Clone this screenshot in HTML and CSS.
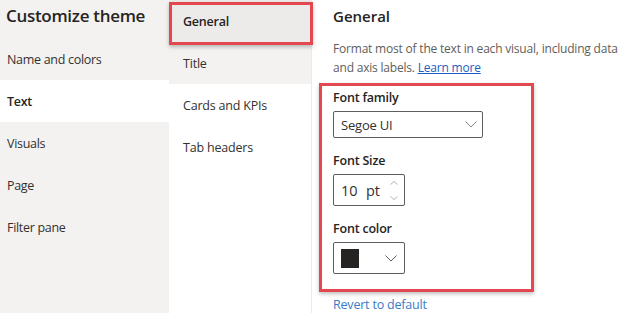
FILE: index.html
```html
<!DOCTYPE html>
<html lang="en">
<head>
    <meta charset="UTF-8">
    <title>Customize theme</title>
    <link rel="stylesheet" href="styles.css">
</head>
<body>

<div class="layout">
    <!-- Sol menü -->
    <nav class="sidebar">
        <h1>Customize theme</h1>
        <div class="side-item">Name and colors</div>
        <div class="side-item active">Text</div>
        <div class="side-item">Visuals</div>
        <div class="side-item">Page</div>
        <div class="side-item">Filter pane</div>
    </nav>

    <!-- Alt sekmeler -->
    <div class="subnav">
        <div class="sub-item active">General<span class="mark"></span></div>
        <div class="sub-item hover">Title</div>
        <div class="sub-item">Cards and KPIs</div>
        <div class="sub-item">Tab headers</div>
    </div>

    <!-- Ayarlar -->
    <main class="content">
        <h2>General</h2>
        <p class="desc">Format most of the text in each visual, including data and axis labels. <a href="#">Learn more</a></p>

        <div class="highlight">
            <div class="field">
                <label>Font family</label>
                <div class="select wide">
                    <span>Segoe UI</span>
                    <svg class="chev" width="12" height="7" viewBox="0 0 12 7"><path d="M0.5 0.5 L6 6 L11.5 0.5" fill="none" stroke="#8a8886" stroke-width="1"/></svg>
                </div>
            </div>
            <div class="field">
                <label>Font Size</label>
                <div class="spin">
                    <span class="num">10</span>
                    <span class="unit">pt</span>
                    <span class="arrows">
                        <svg width="8" height="4" viewBox="0 0 8 4"><path d="M0.5 3.5 L4 0.5 L7.5 3.5" fill="none" stroke="#a19f9d" stroke-width="0.8"/></svg>
                        <svg width="8" height="4" viewBox="0 0 8 4"><path d="M0.5 0.5 L4 3.5 L7.5 0.5" fill="none" stroke="#a19f9d" stroke-width="0.8"/></svg>
                    </span>
                </div>
            </div>
            <div class="field">
                <label>Font color</label>
                <div class="select color">
                    <span class="swatch"></span>
                    <svg class="chev" width="12" height="7" viewBox="0 0 12 7"><path d="M0.5 0.5 L6 6 L11.5 0.5" fill="none" stroke="#605e5c" stroke-width="1"/></svg>
                </div>
            </div>
        </div>

        <a href="#" class="revert">Revert to default</a>
    </main>
</div>

</body>
</html>
```

FILE: styles.css
```css
body {
    margin: 0;
    font-family: 'Open Sans', 'Noto Sans', sans-serif;
    color: #323130;
    background-color: #fff;
}
.layout {
    display: flex;
    height: 313px;
    overflow: hidden;
}
.sidebar {
    width: 169px;
    flex-shrink: 0;
    background-color: #f3f2f1;
}
.sidebar h1 {
    margin: 0;
    height: 38px;
    padding: 4px 0 0 6px;
    box-sizing: border-box;
    font-size: 17px;
    font-weight: 600;
    color: #252423;
    letter-spacing: -0.3px;
}
.side-item {
    height: 42px;
    display: flex;
    align-items: center;
    padding-left: 7px;
    font-size: 12.5px;
    letter-spacing: -0.3px;
    color: #323130;
}
.side-item.active {
    background-color: #fff;
    font-weight: 600;
    color: #252423;
}
.subnav {
    width: 142px;
    flex-shrink: 0;
    border-right: 1px solid #edebe9;
    background-color: #fff;
}
.sub-item {
    position: relative;
    height: 42px;
    display: flex;
    align-items: center;
    padding-left: 14px;
    font-size: 12.5px;
    letter-spacing: -0.2px;
}
.sub-item.active {
    background-color: #edebe9;
    font-weight: 600;
    color: #252423;
}
.sub-item.hover {
    background-color: #f3f2f1;
}
.sub-item .mark {
    position: absolute;
    z-index: 1;
    left: 0;
    right: -2px;
    top: 2px;
    height: 43px;
    box-sizing: border-box;
    border: 3px solid #e3474f;
    box-shadow: 0 2px 4px rgba(0, 0, 0, 0.25);
}
.content {
    flex: 1;
    padding: 4px 0 0 21px;
}
.content h2 {
    margin: 0;
    font-size: 15px;
    font-weight: 600;
    line-height: 24px;
    color: #252423;
}
.desc {
    margin: 11px 0 0 0;
    font-size: 12px;
    line-height: 19px;
    color: #605e5c;
    letter-spacing: -0.2px;
}
.desc a {
    color: #1b5ebf;
}
.highlight {
    margin: 6px 0 0 -14px;
    width: 215px;
    height: 209px;
    box-sizing: border-box;
    border: 3px solid #e3474f;
    box-shadow: 0 2px 4px rgba(0, 0, 0, 0.25);
    padding: 4px 0 0 11px;
}
.field label {
    display: block;
    font-size: 12.5px;
    font-weight: 600;
    line-height: 16px;
    color: #252423;
    letter-spacing: -0.2px;
}
.field + .field {
    margin-top: 15px;
}
.select, .spin {
    margin-top: 5px;
    box-sizing: border-box;
    border: 1px solid #605e5c;
    border-radius: 2px;
    display: flex;
    align-items: center;
}
.select.wide {
    width: 150px;
    height: 27px;
    padding: 0 5px 0 7px;
    justify-content: space-between;
    font-size: 13px;
    letter-spacing: -0.2px;
}
.select.color {
    width: 72px;
    height: 32px;
    padding: 0 7px 0 7px;
    justify-content: space-between;
}
.swatch {
    width: 18px;
    height: 19px;
    background-color: #252423;
}
.spin {
    width: 72px;
    height: 32px;
    padding-left: 7px;
    font-size: 14.5px;
}
.num {
    width: 25px;
}
.unit {
    flex: 1;
}
.arrows {
    display: flex;
    flex-direction: column;
    gap: 11px;
    padding-right: 6px;
}
.arrows svg {
    display: block;
}
.revert {
    display: inline-block;
    margin-top: 3px;
    font-size: 12.5px;
    line-height: 17px;
    color: #3a7bc8;
    text-decoration: none;
    letter-spacing: -0.2px;
}
```
